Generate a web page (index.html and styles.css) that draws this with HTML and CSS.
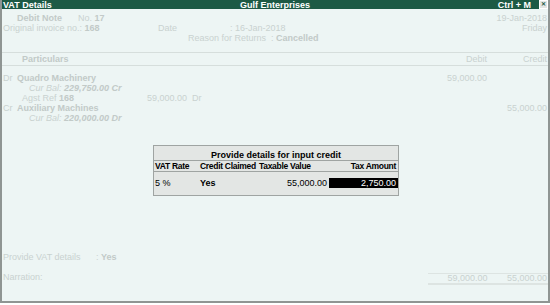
FILE: index.html
```html
<!DOCTYPE html>
<html lang="en">
<head>
    <meta charset="UTF-8">
    <title>VAT Details</title>
    <link rel="stylesheet" href="styles.css">
</head>
<body>
    <div class="window">
        <div class="title-bar">
            <span class="title-left">VAT Details</span>
            <span class="title-center">Gulf Enterprises</span>
            <span class="title-right">Ctrl + M <span class="close-btn">&#x2715;</span></span>
        </div>

        <div class="voucher">
            <!-- Voucher header -->
            <div class="head-row">
                <span class="vch-type">Debit Note</span>
                <span class="vch-no">No. <b>17</b></span>
                <span class="spacer"></span>
                <span class="vch-date">19-Jan-2018</span>
            </div>
            <div class="head-row">
                <span class="orig-inv">Original invoice no.: <b>168</b></span>
                <span class="orig-date">Date</span>
                <span class="orig-date-val">: 16-Jan-2018</span>
                <span class="spacer"></span>
                <span class="vch-day">Friday</span>
            </div>
            <div class="head-row">
                <span class="reason">Reason for Returns &nbsp;: <b>Cancelled</b></span>
            </div>

            <!-- Particulars table -->
            <div class="table-head">
                <span class="col-part">Particulars</span>
                <span class="col-debit">Debit</span>
                <span class="col-credit">Credit</span>
            </div>

            <div class="entries">
                <div class="entry">
                    <span class="drcr">Dr</span>
                    <span class="ledger">Quadro Machinery</span>
                    <span class="col-debit">59,000.00</span>
                    <span class="col-credit"></span>
                </div>
                <div class="sub-line"><i>Cur Bal: <b>229,750.00 Cr</b></i></div>
                <div class="ref-line">
                    <span class="ref-label">Agst Ref <b>168</b></span>
                    <span class="ref-amt">59,000.00 &nbsp;Dr</span>
                </div>
                <div class="entry">
                    <span class="drcr">Cr</span>
                    <span class="ledger">Auxiliary Machines</span>
                    <span class="col-debit"></span>
                    <span class="col-credit">55,000.00</span>
                </div>
                <div class="sub-line"><i>Cur Bal: <b>220,000.00 Dr</b></i></div>
            </div>

            <div class="vat-line">
                <span class="vat-label">Provide VAT details</span>
                <span>: <b>Yes</b></span>
            </div>
            <div class="narr-row">
                <span class="narration">Narration:</span>
                <div class="totals">
                    <span class="col-debit">59,000.00</span>
                    <span class="col-credit">55,000.00</span>
                </div>
            </div>
        </div>

        <!-- Input credit popup -->
        <div class="popup">
            <div class="popup-title">Provide details for input credit</div>
            <div class="popup-head">
                <span class="p-rate">VAT Rate</span>
                <span class="p-claim">Credit Claimed</span>
                <span class="p-taxable head">Taxable Value</span>
                <span class="p-tax">Tax Amount</span>
            </div>
            <div class="popup-row">
                <span class="p-rate">5 %</span>
                <span class="p-claim"><b>Yes</b></span>
                <span class="p-taxable">55,000.00</span>
                <span class="p-tax active">2,750.00</span>
            </div>
        </div>
    </div>
</body>
</html>
```

FILE: styles.css
```css
body {
    margin: 0;
    padding: 0;
    font-family: 'Liberation Sans', Arial, sans-serif;
    font-size: 9px;
    background-color: #ffffff;
}

.window {
    position: relative;
    width: 546px;
    height: 301px;
    background: #edf5f4;
    border-left: 2px solid #8f9593;
    border-right: 2px solid #8f9593;
    border-bottom: 2px solid #8f9593;
    overflow: hidden;
    white-space: nowrap;
}

.title-bar {
    display: flex;
    align-items: center;
    height: 9px;
    background: #1d5a45;
    color: #ffffff;
    font-weight: bold;
    font-size: 9px;
    padding: 0 2px 0 3px;
    margin-left: -2px;
    margin-right: -2px;
}

.title-left {
    width: 237px;
}

.title-center {
    flex: 1;
}

.title-right {
    display: flex;
    align-items: center;
}

.close-btn {
    display: inline-block;
    width: 7px;
    height: 7px;
    margin-left: 8px;
    background: #e4e6e4;
    border: 1px solid #ffffff;
    color: #1d5a45;
    font-size: 6px;
    line-height: 7px;
    text-align: center;
}

.voucher {
    color: #c9d2d0;
    padding-top: 4px;
}

.voucher b {
    color: #c2cac8;
}

.head-row {
    display: flex;
    height: 10px;
    line-height: 10px;
    padding-right: 1px;
}

.spacer {
    flex: 1;
}

.vch-type {
    margin-left: 15px;
    width: 61px;
    font-weight: bold;
    color: #c2cac8;
}

.orig-inv {
    margin-left: 1px;
    width: 155px;
}

.orig-date {
    width: 72px;
}

.reason {
    margin-left: 186px;
}

.table-head {
    display: flex;
    margin-top: 9px;
    height: 11px;
    line-height: 11px;
    border-top: 1px solid #d6dedc;
    border-bottom: 1px solid #d6dedc;
    padding-top: 1px;
}

.col-part {
    margin-left: 20px;
    flex: 1;
    font-weight: bold;
    color: #c2cac8;
}

.col-debit {
    width: 60px;
    text-align: right;
}

.col-credit {
    width: 60px;
    text-align: right;
    padding-right: 1px;
}

.entries {
    padding-top: 7px;
}

.entry {
    display: flex;
    height: 10px;
    line-height: 10px;
}

.drcr {
    width: 14px;
    padding-left: 1px;
}

.ledger {
    flex: 1;
    font-weight: bold;
    color: #c2cac8;
}

.sub-line {
    padding-left: 27px;
    height: 10px;
    line-height: 10px;
}

.ref-line {
    display: flex;
    height: 10px;
    line-height: 10px;
}

.ref-label {
    margin-left: 20px;
    width: 125px;
}

.vat-line {
    display: flex;
    margin-top: 129px;
    height: 10px;
    line-height: 10px;
}

.vat-label {
    margin-left: 1px;
    width: 93px;
}

.narr-row {
    display: flex;
    align-items: flex-start;
    margin-top: 5px;
}

.narration {
    margin-left: 1px;
    flex: 1;
    line-height: 10px;
    padding-top: 5px;
}

.totals {
    display: flex;
    width: 120px;
    height: 9px;
    line-height: 9px;
    margin-top: 6px;
    border-top: 1px solid #dde4e2;
    border-bottom: 2px solid #dde4e2;
}

/* popup */
.popup {
    position: absolute;
    left: 151px;
    top: 145px;
    width: 244px;
    height: 49px;
    background: #e3e6e4;
    border: 1px solid #9fa4a2;
    color: #000000;
}

.popup-title {
    text-align: center;
    font-weight: bold;
    height: 14px;
    line-height: 18px;
    border-bottom: 1px solid #9fa4a2;
}

.popup-head {
    display: flex;
    font-weight: bold;
    font-size: 8.5px;
    letter-spacing: -0.3px;
    height: 10px;
    line-height: 11px;
    border-bottom: 1px solid #9fa4a2;
}

.popup-row {
    display: flex;
    height: 10px;
    line-height: 10px;
    margin-top: 6px;
}

.p-rate {
    width: 45px;
    padding-left: 1px;
}

.p-claim {
    width: 59px;
}

.p-taxable {
    width: 68px;
    text-align: right;
}

.p-taxable.head {
    text-align: left;
}

.p-tax {
    flex: 1;
    text-align: right;
    padding-right: 2px;
    margin-left: 2px;
}

.p-tax.active {
    background: #000000;
    color: #ffffff;
}
```
